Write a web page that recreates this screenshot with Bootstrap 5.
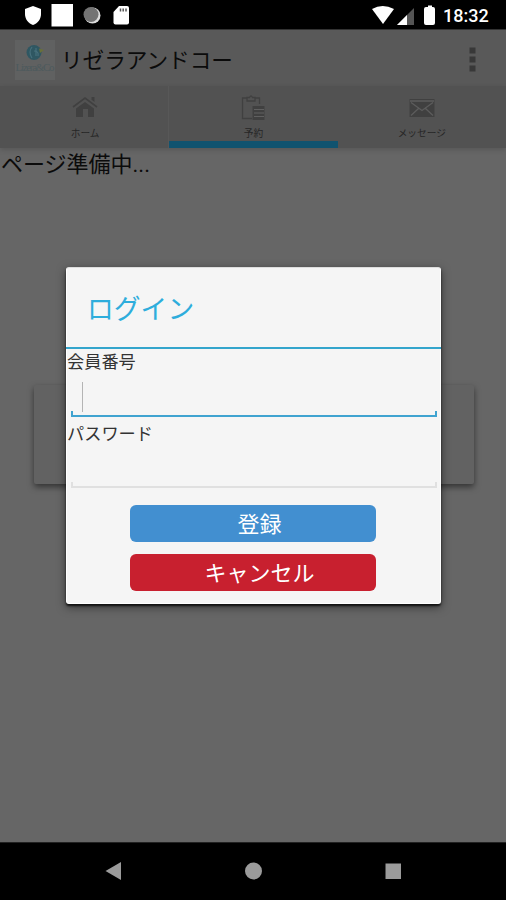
<!DOCTYPE html>
<html lang="ja">
<head>
<meta charset="utf-8">
<meta name="viewport" content="width=device-width, initial-scale=1">
<title>リゼラアンドコー</title>
<link rel="stylesheet" href="https://cdn.jsdelivr.net/npm/bootstrap@5.3.0/dist/css/bootstrap.min.css">
<style>
body{width:506px;height:900px;overflow:hidden;background:#666;color:#0b0b0b;font-family:Roboto,"Noto Sans CJK JP",sans-serif;line-height:1}
svg{display:block;flex:none}
.status-bar{height:30px;background:#000;color:#fff;border-bottom:1px solid #333}
.clock{font-size:18px;font-weight:500;width:47px;padding-top:2px}
.app-bar{height:56px;background:#595959}
.app-title{font-size:21.6px;line-height:30px;padding-top:5px;margin-left:-1px}
.tab-strip{height:62px;padding-left:1px;background:#525252;box-shadow:0 2px 5px rgba(0,0,0,.15)}
.tab-item{height:62px;padding-top:8px;color:#262626;font-size:9.7px;border-bottom:7px solid transparent}
.tab-on{border-bottom-color:#11536f;box-shadow:-1px 0 #585858}
.tab-item span{line-height:12px;margin-top:6px}
.screen{height:694px;position:relative}
.loading{font-size:22px;line-height:30px;padding:2px 0 0 1px}
.back-panel{position:absolute;left:34px;top:237px;width:440px;height:99px;background:#626262;border-radius:2px;box-shadow:0 3px 6px rgba(0,0,0,.5)}
.dialog{position:absolute;left:66px;top:119px;width:375px;height:337px;background:#f5f5f5;border:1px solid #fff;border-top-color:#ddd;border-radius:3px;box-shadow:0 2px 2px rgba(0,0,0,.75),0 3px 10px rgba(0,0,0,.5)}
.dialog-title{height:81px;border-bottom:2px solid #33a5cc;color:#2eaddc;font-size:26.8px;line-height:80px;padding:2px 0 0 21px;margin:0 -1px;font-weight:400}
.field-label{font-size:17.2px;line-height:24px;color:#333;display:block;padding-top:1px}
.field-second{padding-top:5px}
.line-input{height:43px;margin:0 3px 0 4px;border-bottom:2px solid #3fa3d0;position:relative}
.line-input::before,.line-input::after{content:"";position:absolute;bottom:0;width:2px;height:4px;background:#3fa3d0}
.line-input::before{left:0}.line-input::after{right:0}
.line-quiet{border-bottom-color:#e0e0e0;height:42px}
.line-quiet::before,.line-quiet::after{background:#e0e0e0}
.caret{width:1px;height:30px;margin-left:11px;background:#b4b4b4}
.actions{gap:12px;margin:17px 1px 0 0}
.dialog-btn{width:246px;height:37px;border:0;border-radius:6px;font-size:22px;line-height:37px;color:#fff;padding:1px 0 0 13px}
.dialog-btn:hover{color:#fff}
.go,.go:hover{background:#428fd0}
.stop,.stop:hover{background:#c8202f}
.nav-keys{height:58px;background:#000;border-top:1px solid #222}
</style>
<script src="https://cdn.jsdelivr.net/npm/bootstrap@5.3.0/dist/js/bootstrap.bundle.min.js"></script>
</head>
<body>
<header class="status-bar d-flex align-items-center justify-content-between">
  <svg width="140" height="29" viewBox="0 0 140 29">
    <path fill="#fff" d="M33 6l8 3v5c0 5-3 9-8 11-5-2-8-6-8-11V9z"/>
    <path fill="#fff" d="M51.500 4h21.500v22.500H51.500z"/>
    <circle cx="92.500" cy="15.500" r="8" fill="#ddd"/><circle cx="91" cy="14.500" r="7.500" fill="#737373"/>
    <path fill="#fff" d="M119 6h8q2 0 2 2v14.500q0 2-2 2h-11.500q-2 0-2-2V12z"/>
    <path stroke="#555" stroke-width="1.500" d="M120.500 8.500v3M123.200 8.500v3M126 8.500v3"/>
  </svg>
  <div class="d-flex align-items-center">
    <svg width="72" height="29" viewBox="370 0 72 29">
      <path fill="#fff" d="M371 9q10.500-6 22 0L382 24z"/>
      <path fill="#555" d="M413 8v17h-17z"/><path fill="#fff" d="M406 15v10h-10z"/>
      <path fill="#fff" d="M425 7h2V5.500h4V7h1q2 0 2 2v14q0 2-2 2h-7q-2 0-2-2V9q0-2 2-2z"/>
    </svg>
    <span class="clock me-3">18:32</span>
  </div>
</header>

<nav class="app-bar d-flex align-items-center">
  <svg width="62" height="56" viewBox="0 30 62 56">
    <path fill="#606161" d="M15 40h40v40H15z"/>
    <circle cx="34" cy="52.500" r="7.500" fill="#2f5762"/>
    <path d="M32 47q-4 5 0 11M36 48v8M34 51q5 0 4 5" fill="none" stroke="#47707c" stroke-width="1.200"/>
    <path fill="#69703b" d="M39 48.500l5 1.500-4 3z"/>
    <text x="15.500" y="71" font-family="Liberation Serif, serif" font-size="11" textLength="39" fill="#4d5a5d">Lizera&amp;Co</text>
  </svg>
  <span class="app-title flex-grow-1">リゼラアンドコー</span>
  <svg width="40" height="56" viewBox="466 30 40 56"><path fill="#383838" d="M469.500 47.500h6v6h-6zM469.500 56.500h6v6h-6zM469.500 65.500h6v6h-6z"/></svg>
</nav>

<nav class="tab-strip row g-0">
  <div class="col tab-item d-flex flex-column align-items-center">
    <svg width="28" height="28" viewBox="0 0 28 28"><path fill="none" stroke="#404040" stroke-width="1.600" d="M2 13L14 4l12 9"/><path fill="#404040" d="M5 14.500L14 8l9 6.500V23h-6v-8h-5v8H5zM20.500 3h3v5l-3-2.300z"/></svg>
    <span>ホーム</span>
  </div>
  <div class="col tab-item tab-on d-flex flex-column align-items-center">
    <svg width="28" height="28" viewBox="0 0 28 28"><path fill="none" stroke="#404040" stroke-width="1.300" d="M13 24.500H3.500V4H8m8 0h4.500v6M8 7V3.500h2.500q1.500-3 3 0H16V7z"/><path fill="#404040" d="M13.500 12H25.500v14H13.500z"/><path stroke="#606060" d="M15 15.500h10M15 19h10M15 22.500h10"/></svg>
    <span>予約</span>
  </div>
  <div class="col tab-item d-flex flex-column align-items-center">
    <svg width="28" height="28" viewBox="0 0 28 28"><path fill="#404040" d="M1.500 5h25v18h-25z"/><path fill="none" stroke="#5c5c5c" stroke-width="1.300" d="M2 7h24M3 8.500l11 8 11-8M3 21.500l7.500-7M25 21.500l-7.500-7"/></svg>
    <span>メッセージ</span>
  </div>
</nav>

<main class="screen">
  <p class="loading m-0">ページ準備中...</p>
  <div class="back-panel"></div>
  <form class="dialog">
    <h1 class="dialog-title mb-0">ログイン</h1>
    <label class="field-label">会員番号</label>
    <div class="line-input pt-2"><div class="caret"></div></div>
    <label class="field-label field-second">パスワード</label>
    <div class="line-input line-quiet"></div>
    <div class="actions d-flex flex-column align-items-center">
      <button type="button" class="btn dialog-btn go">登録</button>
      <button type="button" class="btn dialog-btn stop">キャンセル</button>
    </div>
  </form>
</main>

<footer class="nav-keys">
  <svg width="506" height="57" viewBox="0 843 506 57"><g fill="#9b9b9b"><path d="M105.500 871l15.500-9v18z"/><circle cx="253.500" cy="871" r="8.500"/><path d="M385.500 863.500h15.500v15.500h-15.500z"/></g></svg>
</footer>
</body>
</html>
